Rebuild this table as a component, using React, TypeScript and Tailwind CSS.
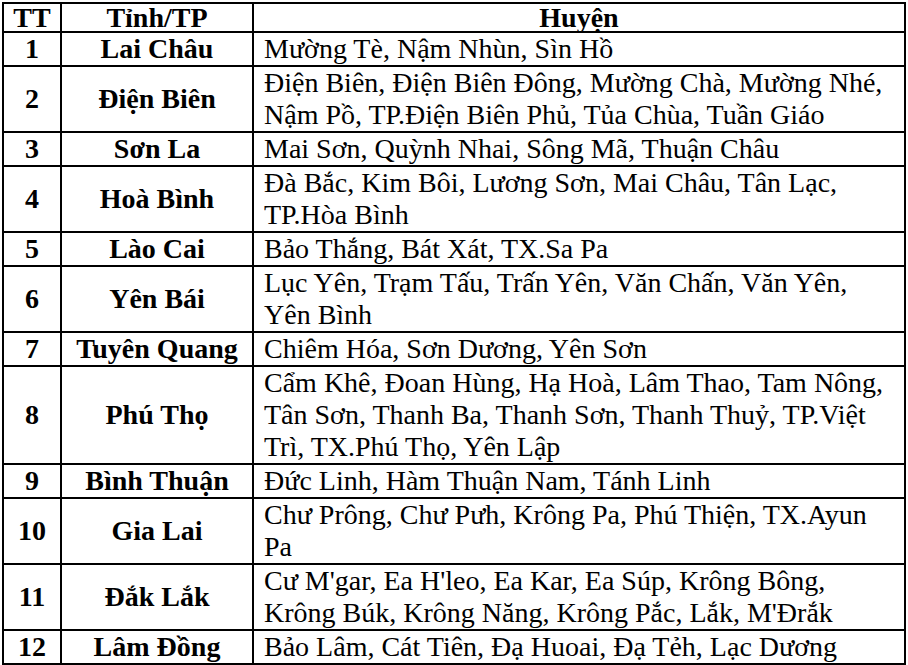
const rows: { tt: string; tinh: string; huyen: string[] }[] = [
  { tt: '1', tinh: 'Lai Châu', huyen: ['Mường Tè, Nậm Nhùn, Sìn Hồ'] },
  { tt: '2', tinh: 'Điện Biên', huyen: ['Điện Biên, Điện Biên Đông, Mường Chà, Mường Nhé,', 'Nậm Pồ, TP.Điện Biên Phủ, Tủa Chùa, Tuần Giáo'] },
  { tt: '3', tinh: 'Sơn La', huyen: ['Mai Sơn, Quỳnh Nhai, Sông Mã, Thuận Châu'] },
  { tt: '4', tinh: 'Hoà Bình', huyen: ['Đà Bắc, Kim Bôi, Lương Sơn, Mai Châu, Tân Lạc,', 'TP.Hòa Bình'] },
  { tt: '5', tinh: 'Lào Cai', huyen: ['Bảo Thắng, Bát Xát, TX.Sa Pa'] },
  { tt: '6', tinh: 'Yên Bái', huyen: ['Lục Yên, Trạm Tấu, Trấn Yên, Văn Chấn, Văn Yên,', 'Yên Bình'] },
  { tt: '7', tinh: 'Tuyên Quang', huyen: ['Chiêm Hóa, Sơn Dương, Yên Sơn'] },
  { tt: '8', tinh: 'Phú Thọ', huyen: ['Cẩm Khê, Đoan Hùng, Hạ Hoà, Lâm Thao, Tam Nông,', 'Tân Sơn, Thanh Ba, Thanh Sơn, Thanh Thuỷ, TP.Việt', 'Trì, TX.Phú Thọ, Yên Lập'] },
  { tt: '9', tinh: 'Bình Thuận', huyen: ['Đức Linh, Hàm Thuận Nam, Tánh Linh'] },
  { tt: '10', tinh: 'Gia Lai', huyen: ['Chư Prông, Chư Pưh, Krông Pa, Phú Thiện, TX.Ayun', 'Pa'] },
  { tt: '11', tinh: 'Đắk Lắk', huyen: ["Cư M'gar, Ea H'leo, Ea Kar, Ea Súp, Krông Bông,", "Krông Búk, Krông Năng, Krông Pắc, Lắk, M'Đrắk"] },
  { tt: '12', tinh: 'Lâm Đồng', huyen: ['Bảo Lâm, Cát Tiên, Đạ Huoai, Đạ Tẻh, Lạc Dương'] },
];

export default function App() {
  return (
    <div className="w-[908px] h-[665px] bg-white pl-[2px] pt-[2px] text-black" style={{ fontFamily: '"Liberation Serif", "Times New Roman", serif' }}>
      <table className="border-collapse w-[904px] table-fixed text-[28px] leading-[32px]">
        <colgroup>
          <col className="w-[58px]" />
          <col className="w-[192px]" />
          <col />
        </colgroup>
        <thead>
          <tr className="leading-[27px]">
            <th className="border-2 border-black p-0 font-bold text-center">TT</th>
            <th className="border-2 border-black p-0 font-bold text-center">Tỉnh/TP</th>
            <th className="border-2 border-black p-0 font-bold text-center">Huyện</th>
          </tr>
        </thead>
        <tbody>
          {rows.map((r) => (
            <tr key={r.tt}>
              <td className="border-2 border-black p-0 font-bold text-center align-middle">{r.tt}</td>
              <td className="border-2 border-black p-0 font-bold text-center align-middle whitespace-nowrap">{r.tinh}</td>
              <td className="border-2 border-black py-0 pl-[10px] pr-0 align-middle">
                {r.huyen.map((line, i) => (
                  <div key={i} className="whitespace-nowrap">{line}</div>
                ))}
              </td>
            </tr>
          ))}
        </tbody>
      </table>
    </div>
  );
}
